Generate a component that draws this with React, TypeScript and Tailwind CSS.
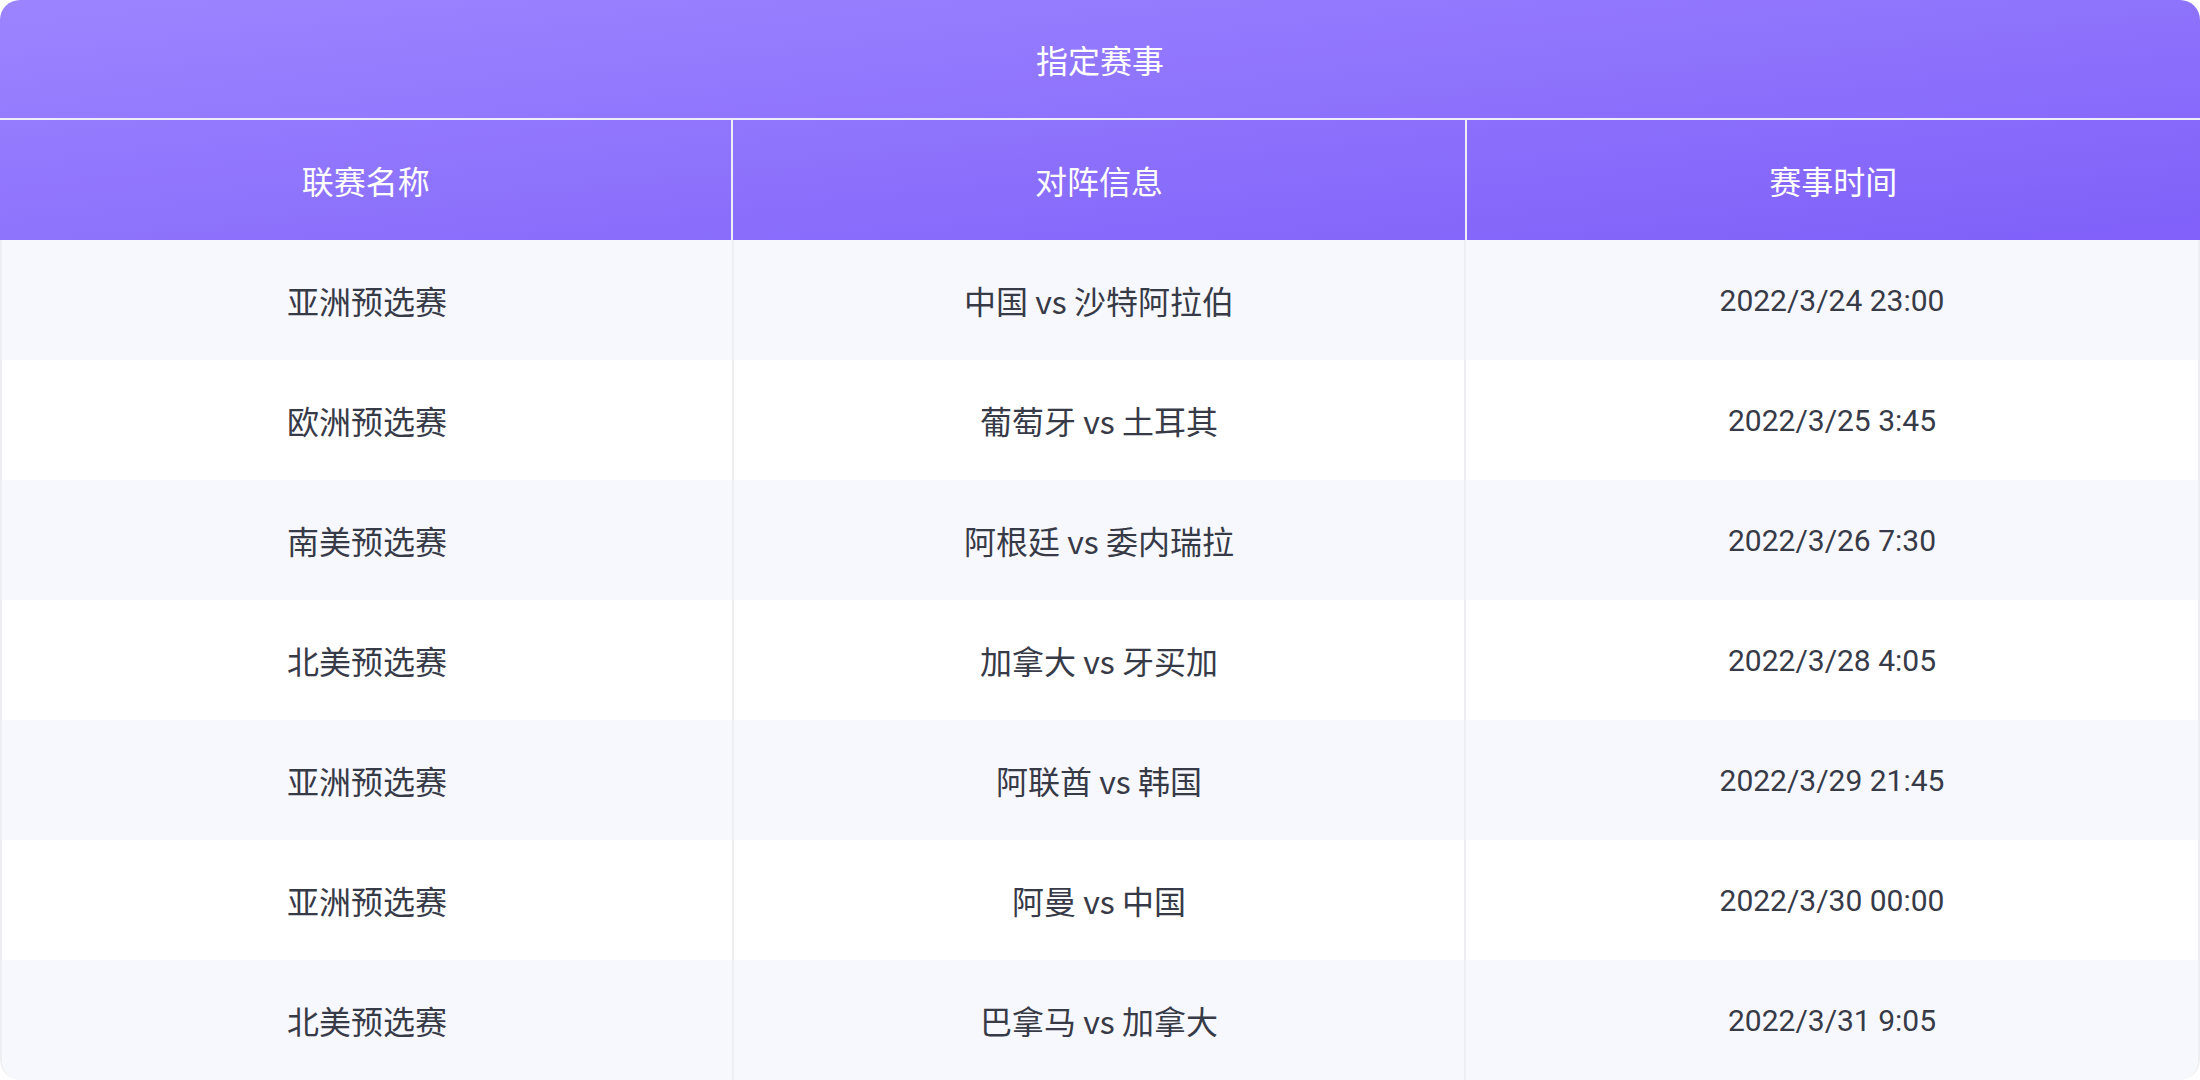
import React from "react";

const rows: [string, string, string][] = [
  ["亚洲预选赛", "中国 vs 沙特阿拉伯", "2022/3/24 23:00"],
  ["欧洲预选赛", "葡萄牙 vs 土耳其", "2022/3/25 3:45"],
  ["南美预选赛", "阿根廷 vs 委内瑞拉", "2022/3/26 7:30"],
  ["北美预选赛", "加拿大 vs 牙买加", "2022/3/28 4:05"],
  ["亚洲预选赛", "阿联酋 vs 韩国", "2022/3/29 21:45"],
  ["亚洲预选赛", "阿曼 vs 中国", "2022/3/30 00:00"],
  ["北美预选赛", "巴拿马 vs 加拿大", "2022/3/31 9:05"],
];

const cjk = "font-['Noto_Sans_CJK_SC','Noto_Sans',sans-serif]";

export default function App() {
  return (
    <div className="w-[2200px] h-[1080px] bg-white overflow-hidden">
      <div className="w-full h-full flex flex-col rounded-[20px] overflow-hidden">
        <div className="bg-gradient-to-br from-[#9c84ff] to-[#8060f9] text-white">
          <div className={`h-[118px] flex items-center justify-center text-[32px] ${cjk}`}>指定赛事</div>
          <div className="h-[2px] bg-[#eeeef8]" />
          <div className={`h-[120px] grid grid-cols-3 text-[32px] ${cjk}`}>
            <div className="flex items-center justify-center border-r-2 border-[#eeeef8]">联赛名称</div>
            <div className="flex items-center justify-center border-r-2 border-[#eeeef8]">对阵信息</div>
            <div className="flex items-center justify-center">赛事时间</div>
          </div>
        </div>
        <div className="flex-1 flex flex-col border-x-2 border-[#ededf2] rounded-b-[20px] overflow-hidden">
          {rows.map((r, i) => (
            <div
              key={i}
              className={`h-[120px] grid grid-cols-3 text-[32px] text-[#373a47] ${i % 2 === 0 ? "bg-[#f7f8fd]" : "bg-white"}`}
            >
              <div className={`flex items-center justify-center border-r-2 border-[#ededf2] ${cjk}`}>{r[0]}</div>
              <div className={`flex items-center justify-center border-r-2 border-[#ededf2] ${cjk}`}>{r[1]}</div>
              <div className="flex items-center justify-center font-['Roboto',sans-serif] text-[30px]">{r[2]}</div>
            </div>
          ))}
        </div>
      </div>
    </div>
  );
}
